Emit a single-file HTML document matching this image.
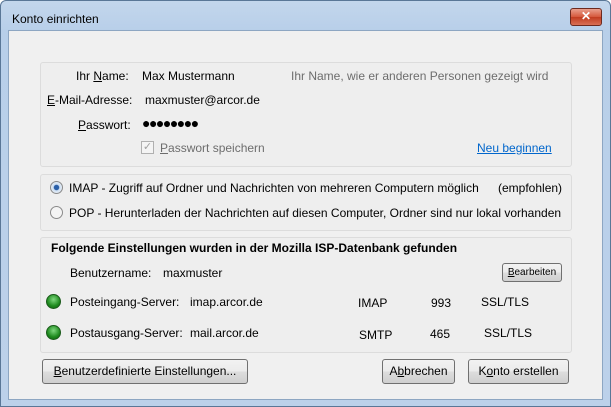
<!DOCTYPE html><html><head><style>
body{margin:0;width:611px;height:407px;overflow:hidden;font-family:"Liberation Sans",sans-serif;font-size:12px;color:#000;position:relative}
.win{position:absolute;left:0;top:0;width:609px;height:405px;border:1px solid #5a7797;border-radius:6px 6px 0 0;background:linear-gradient(#c3d6ec,#b8cfe9 30px,#bcd1ea);}
.client{position:absolute;left:8px;top:30px;width:593px;height:368px;background:#f0f0f0;border:1px solid #8da6c2}
.t{position:absolute;white-space:nowrap;line-height:14px}
.grp{position:absolute;left:40px;width:530px;border:1px solid #dcdcdc;border-radius:3px;background:#eeeeee}
.btn{position:absolute;border:1px solid #707070;border-radius:3px;background:linear-gradient(#f2f2f2,#ebebeb 50%,#dddddd 51%,#cfcfcf);text-align:center;font-size:12px;box-sizing:border-box}
.dot{position:absolute;width:13px;height:13px;border-radius:50%;background:radial-gradient(circle at 50% 35%,#7fd87f,#1e8a1e 60%,#0f5d0f);border:1px solid #1a5a1a}
.radio{position:absolute;width:11px;height:11px;border-radius:50%;border:1px solid #8a8a8a;background:#f4f4f4}
u{text-decoration:underline}
</style></head><body>
<div class="win"></div>
<div class="t" style="left:12px;top:12px">Konto einrichten</div>
<div style="position:absolute;left:570px;top:8px;width:30px;height:16px;border:1px solid #6d2a1f;border-radius:3px;background:linear-gradient(#e9a08d,#d5573b 50%,#c13c20 51%,#d97055);color:#fff;font-weight:bold;text-align:center;line-height:15px;font-size:12px">✕</div>
<div class="client"></div>

<div class="grp" style="top:62px;height:103px"></div>
<div class="t" style="left:76px;top:69px">Ihr <u>N</u>ame:</div>
<div class="t" style="left:142px;top:69px">Max Mustermann</div>
<div class="t" style="left:291px;top:69px;color:#6d6d6d">Ihr Name, wie er anderen Personen gezeigt wird</div>
<div class="t" style="left:47px;top:93px"><u>E</u>-Mail-Adresse:</div>
<div class="t" style="left:145px;top:93px">maxmuster@arcor.de</div>
<div class="t" style="left:78px;top:118px"><u>P</u>asswort:</div>
<div class="t" style="left:142px;top:116px;font-size:14px;letter-spacing:-1.5px">●●●●●●●●</div>
<div style="position:absolute;left:141px;top:141px;width:11px;height:11px;border:1px solid #b0b0b0;background:#f4f4f4;color:#a0a0a0;font-size:11px;line-height:11px;text-align:center">✓</div>
<div class="t" style="left:160px;top:141px;color:#6d6d6d"><u>P</u>asswort speichern</div>
<div class="t" style="left:477px;top:141px;color:#0066cc"><u>Neu beginnen</u></div>

<div class="grp" style="top:174px;height:55px"></div>
<div class="radio" style="left:50px;top:181px;background:radial-gradient(circle,#2a5fa8 30%,#cfe0f3 40%,#f4f4f4)"></div>
<div class="t" style="left:69px;top:181px">IMAP - Zugriff auf Ordner und Nachrichten von mehreren Computern möglich</div>
<div class="t" style="left:498px;top:181px">(empfohlen)</div>
<div class="radio" style="left:50px;top:206px"></div>
<div class="t" style="left:69px;top:206px">POP - Herunterladen der Nachrichten auf diesen Computer, Ordner sind nur lokal vorhanden</div>

<div class="grp" style="top:237px;height:114px"></div>
<div class="t" style="left:51px;top:241px;font-weight:bold">Folgende Einstellungen wurden in der Mozilla ISP-Datenbank gefunden</div>
<div class="t" style="left:70px;top:266px">Benutzername:</div>
<div class="t" style="left:163px;top:266px">maxmuster</div>
<div class="btn" style="left:502px;top:263px;width:60px;height:19px;line-height:17px;font-size:10px"><u>B</u>earbeiten</div>
<div class="dot" style="left:46px;top:294px"></div>
<div class="t" style="left:70px;top:295px">Posteingang-Server:</div>
<div class="t" style="left:190px;top:295px">imap.arcor.de</div>
<div class="t" style="left:358px;top:296px">IMAP</div>
<div class="t" style="left:431px;top:296px">993</div>
<div class="t" style="left:481px;top:295px">SSL/TLS</div>
<div class="dot" style="left:46px;top:325px"></div>
<div class="t" style="left:70px;top:326px">Postausgang-Server:</div>
<div class="t" style="left:190px;top:326px">mail.arcor.de</div>
<div class="t" style="left:359px;top:328px">SMTP</div>
<div class="t" style="left:430px;top:327px">465</div>
<div class="t" style="left:484px;top:326px">SSL/TLS</div>

<div class="btn" style="left:42px;top:359px;width:206px;height:25px;line-height:23px"><u>B</u>enutzerdefinierte Einstellungen...</div>
<div class="btn" style="left:382px;top:359px;width:73px;height:25px;line-height:23px">A<u>b</u>brechen</div>
<div class="btn" style="left:468px;top:359px;width:101px;height:25px;line-height:23px">K<u>o</u>nto erstellen</div>
</body></html>
